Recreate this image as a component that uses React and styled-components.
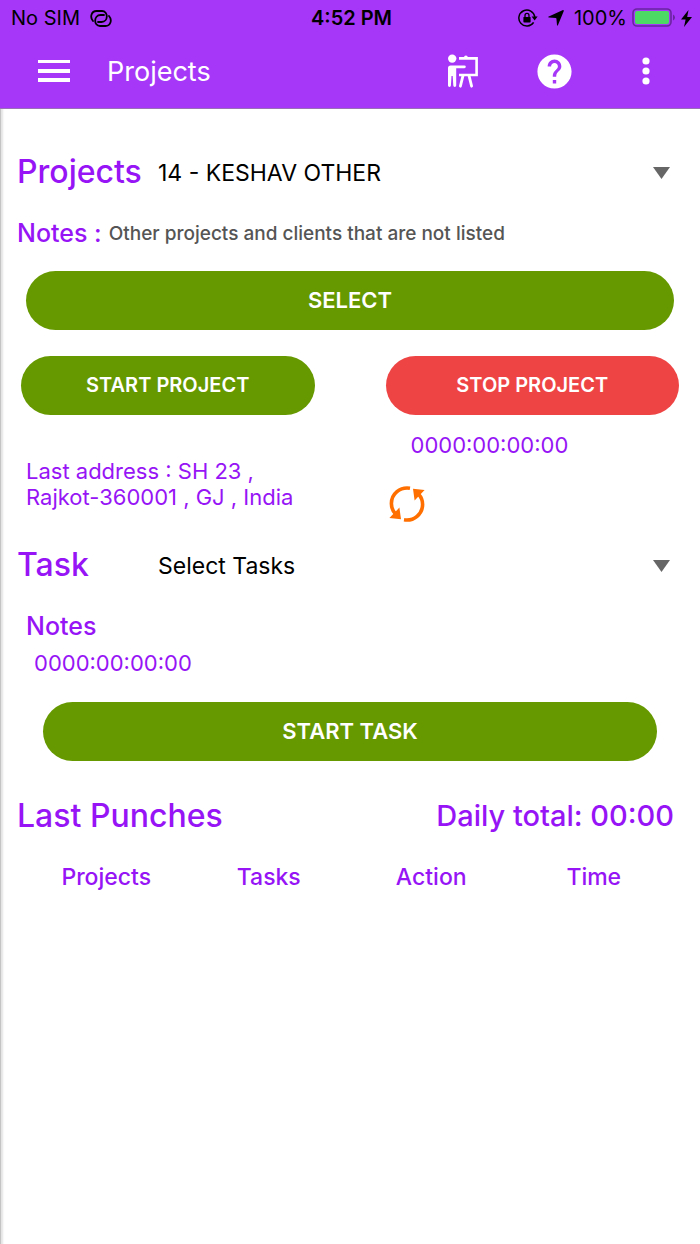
import React, { useState } from 'react';
import styled, { createGlobalStyle } from 'styled-components';
import { MdHelp } from 'react-icons/md';

const GlobalStyle = createGlobalStyle`
  * {
    box-sizing: border-box;
  }

  body {
    margin: 0;
    background: #fff;
    font-family: Inter, "Liberation Sans", sans-serif;
  }

  button, select {
    font-family: inherit;
  }
`

const PageSC = styled.div`
  min-height: 100vh;
  display: flex;
  flex-direction: column;
`

const HeaderSC = styled.header`
  background: #a637f8;
  border-bottom: 1px solid #9a70b8;
`

const StatusBarSC = styled.div`
  display: grid;
  grid-template-columns: 1fr auto 1fr;
  align-items: center;
  height: 36px;
  padding: 0 8px 0 11px;
  font-size: 20px;
  color: #000;
`

const StatusGroupSC = styled.div`
  display: flex;
  align-items: center;
  justify-content: ${props => props.$end ? "flex-end" : "flex-start"};
  gap: 10px;
`

const PowerSC = styled.div`
  display: flex;
  align-items: center;
  gap: 5px;
`

const ClockSC = styled.time`
  font-weight: 600;
`

const ToolbarSC = styled.div`
  display: flex;
  align-items: center;
  padding: 13px 28px 15px;
`

const TitleSC = styled.h1`
  flex: 1;
  margin: 0 0 0 27px;
  padding-top: 2px;
  font-size: 27px;
  font-weight: 400;
  line-height: 42px;
  color: #fff;
`

const IconButtonSC = styled.button`
  display: flex;
  align-items: center;
  justify-content: center;
  width: ${props => props.$small ? "42px" : "52px"};
  height: ${props => props.$small ? "36px" : "42px"};
  padding: 0;
  border: none;
  background: none;
  color: ${props => props.$small ? "#ff6f00" : "#fff"};
  cursor: pointer;
`

const ActionsSC = styled.div`
  display: flex;
  gap: 40px;
`

const MainSC = styled.main`
  flex: 1;
  padding: 37px 17px 0 16px;
  border-left: 1px solid #c4c4c4;
  box-shadow: inset 4px 0 2px -2px #e4e4e4;
`

const FieldRowSC = styled.div`
  display: flex;
  align-items: center;
`

const FieldLabelSC = styled.label`
  width: 141px;
  font-size: 32px;
  font-weight: 500;
  line-height: 52px;
  color: #9614f5;
`

const SelectWrapSC = styled.div`
  flex: 1;
  display: flex;
  align-items: center;
  padding: 2px 13px 0 0;
`

const SelectSC = styled.select`
  flex: 1;
  padding: 0;
  border: none;
  background: none;
  appearance: none;
  font-size: 23px;
  line-height: 36px;
  color: #000;
`

const NotesSC = styled.div`
  display: flex;
  align-items: center;
  gap: 7px;
  margin: 17px 0 20px;
  line-height: 36px;
`

const NotesLabelSC = styled.span`
  font-size: 25px;
  font-weight: 500;
  color: #9614f5;
`

const NotesTextSC = styled.span`
  padding-top: 2px;
  font-size: 19px;
  font-weight: 500;
  line-height: 34px;
  color: #555;
`

const TaskNotesSC = styled.p`
  margin: 17px 9px 6px;
  font-size: 25px;
  font-weight: 500;
  line-height: 36px;
  color: #9614f5;
`

const PillSC = styled.button`
  display: block;
  width: 100%;
  padding: 0;
  border: none;
  border-radius: 30px;
  background: ${props => props.$danger ? "#ef4444" : "#669900"};
  font-size: ${props => props.$compact ? "20px" : "22px"};
  font-weight: 600;
  line-height: 59px;
  color: #fff;
  cursor: pointer;
`

const InsetSC = styled.div`
  margin: 0 ${props => props.$wide ? "26px" : "9px"};
`

const SplitSC = styled.div`
  display: grid;
  grid-template-columns: 1fr 1fr;
  column-gap: 71px;
  margin: 26px 4px 17px;
`

const AddressSC = styled.address`
  margin: 43px 5px 0;
  font-size: 22px;
  font-style: normal;
  line-height: 26px;
  color: #9614f5;
`

const TimerSC = styled.div`
  margin: ${props => props.$task ? "0 17px 26px" : "17px 25px 28px"};
  font-size: 22px;
  line-height: 26px;
  color: #9614f5;
`

const SummarySC = styled.div`
  display: flex;
  justify-content: space-between;
  align-items: center;
  margin: 29px 9px 17px 0;
  line-height: 52px;
  color: #9614f5;
`

const SummaryTitleSC = styled.h2`
  margin: 0;
  font-size: 32px;
  font-weight: 500;
`

const SummaryTotalSC = styled.span`
  font-size: 29px;
  font-weight: 500;
`

const TableSC = styled.table`
  width: 100%;
  padding: 0 8px;
  table-layout: fixed;
  border-spacing: 0;
`

const HeadCellSC = styled.th`
  padding: 0;
  font-size: 23px;
  font-weight: 500;
  line-height: 36px;
  color: #9614f5;
`

const LinkIcon = () => (
  <svg width="22" height="17" viewBox="0 0 22 17" fill="none" stroke="#000" strokeWidth="1.8" strokeLinecap="round">
    <path d="M14 5h-3.500C3.500 5 3.500 16 10 16h5.500c5 0 7-6 3.500-10" />
    <path d="M14 5h-3.500C3.500 5 3.500 16 10 16h5.500c5 0 7-6 3.500-10" transform="rotate(180 11 8.500)" />
  </svg>
)

const RotationLockIcon = () => (
  <svg width="20" height="18" viewBox="0 0 20 18" fill="none" stroke="#000">
    <path d="M15.6 13.4A8 8 0 1 1 16.8 8" strokeWidth="1.5" />
    <path d="M13.6 7.6h6l-3 4z" fill="#000" stroke="none" />
    <rect x="5.4" y="8" width="7.2" height="5.4" rx="0.6" fill="#000" stroke="none" />
    <path d="M7 8.5V6.4a2 2 0 0 1 4 0v2.1" strokeWidth="1.3" />
  </svg>
)

const LocationIcon = () => (
  <svg width="16" height="16" viewBox="0 0 16 16">
    <path d="M15 0q1 0 .8 1L10 15q-.6 1.4-1 0L8.4 8.6Q8.4 8 7.600 8L1 7.400Q-.6 7 .8 6.400z" />
  </svg>
)

const BatteryIcon = () => (
  <svg width="44" height="20" viewBox="0 0 44 20">
    <rect x="1" y="1" width="38" height="17" rx="4" fill="none" stroke="#6a24a0" strokeWidth="1.6" />
    <rect x="3" y="3" width="34" height="13" rx="2" fill="#4cd964" />
    <path d="M41 6.6q2 1 2 2.9t-2 2.9z" fill="#6a24a0" />
  </svg>
)

const BoltIcon = () => (
  <svg width="11" height="17" viewBox="0 0 11 17">
    <path d="M7.5 0L0 9.6h4.6L3 17l8-10H6.2z" />
  </svg>
)

const MenuIcon = () => (
  <svg width="32" height="22" viewBox="0 0 32 22" fill="currentColor">
    <path d="M0 0h32v3H0zM0 9h32v4H0zM0 18h32v4H0z" />
  </svg>
)

const TrainingIcon = () => (
  <svg width="32" height="34" viewBox="-2 0 32 34" fill="currentColor">
    <circle cx="4.2" cy="4.6" r="4.2" />
    <path d="M0 14q0-2.600 2.600-2.600H16.400a1.400 1.400 0 0 1 0 2.800H8.200V31.600a1.400 1.400 0 0 1-2.900 0L4.700 22H3.500L2.900 31.600a1.400 1.400 0 0 1-2.900 0z" />
    <path d="M11 4.400h17.600v16.600H11" fill="none" stroke="currentColor" strokeWidth="2.600" />
    <path d="M16 3.400a1.900 1.900 0 0 1 3.800 0z" />
    <path d="M15 21.600l-2.600 10.600M21 21.600l2.600 10.600" fill="none" stroke="currentColor" strokeWidth="2.800" strokeLinecap="round" />
  </svg>
)

const DotsIcon = () => (
  <svg width="8" height="28" viewBox="0 0 8 28" fill="currentColor">
    <circle cx="4" cy="4" r="3.6" />
    <circle cx="4" cy="14" r="3.6" />
    <circle cx="4" cy="24" r="3.6" />
  </svg>
)

const SyncIcon = () => (
  <svg width="36" height="36" viewBox="0 0 36 36" fill="none" stroke="currentColor" strokeWidth="3.6">
    <path d="M21 2.2C11 .6 2.4 8 2.4 17.6c0 4.400 1.400 7.400 4 10.200" />
    <path d="M15 33.8C25 35.4 33.6 28 33.6 18.4c0-4.4-1.4-7.4-4-10.2" />
    <path d="M24 2.800l11.600 1.200L25.600 14.400zM12 33.200L.4 32 10.400 21.600z" fill="currentColor" stroke="none" />
  </svg>
)

const CaretIcon = () => (
  <svg width="17" height="12" viewBox="0 0 17 12" fill="#666">
    <path d="M0 0h17L8.5 12z" />
  </svg>
)

const columns = ["Projects", "Tasks", "Action", "Time"]

export default function App() {
  const [project, setProject] = useState("14")
  const [task, setTask] = useState("")

  return (
    <PageSC>
      <GlobalStyle />
      <HeaderSC>
        <StatusBarSC>
          <StatusGroupSC>No SIM <LinkIcon /></StatusGroupSC>
          <ClockSC>4:52 PM</ClockSC>
          <StatusGroupSC $end>
            <RotationLockIcon />
            <LocationIcon />
            <PowerSC>
              <span>100%</span>
              <BatteryIcon />
              <BoltIcon />
            </PowerSC>
          </StatusGroupSC>
        </StatusBarSC>
        <ToolbarSC>
          <IconButtonSC aria-label="Menu"><MenuIcon /></IconButtonSC>
          <TitleSC>Projects</TitleSC>
          <ActionsSC>
            <IconButtonSC aria-label="Training"><TrainingIcon /></IconButtonSC>
            <IconButtonSC aria-label="Help"><MdHelp size={41} /></IconButtonSC>
            <IconButtonSC aria-label="More"><DotsIcon /></IconButtonSC>
          </ActionsSC>
        </ToolbarSC>
      </HeaderSC>

      <MainSC>
        <FieldRowSC>
          <FieldLabelSC htmlFor="project">Projects</FieldLabelSC>
          <SelectWrapSC>
            <SelectSC id="project" value={project} onChange={ev => setProject(ev.target.value)}>
              <option value="14">14 - KESHAV OTHER</option>
            </SelectSC>
            <CaretIcon />
          </SelectWrapSC>
        </FieldRowSC>
        <NotesSC>
          <NotesLabelSC>Notes :</NotesLabelSC>
          <NotesTextSC>Other projects and clients that are not listed</NotesTextSC>
        </NotesSC>
        <InsetSC><PillSC>SELECT</PillSC></InsetSC>

        <SplitSC>
          <div>
            <PillSC $compact>START PROJECT</PillSC>
            <AddressSC>Last address : SH 23 ,<br />Rajkot-360001 , GJ , India</AddressSC>
          </div>
          <div>
            <PillSC $compact $danger>STOP PROJECT</PillSC>
            <TimerSC>0000:00:00:00</TimerSC>
            <IconButtonSC $small aria-label="Refresh address"><SyncIcon /></IconButtonSC>
          </div>
        </SplitSC>

        <FieldRowSC>
          <FieldLabelSC htmlFor="task">Task</FieldLabelSC>
          <SelectWrapSC>
            <SelectSC id="task" value={task} onChange={ev => setTask(ev.target.value)}>
              <option value="">Select Tasks</option>
            </SelectSC>
            <CaretIcon />
          </SelectWrapSC>
        </FieldRowSC>
        <TaskNotesSC>Notes</TaskNotesSC>
        <TimerSC $task>0000:00:00:00</TimerSC>
        <InsetSC $wide><PillSC>START TASK</PillSC></InsetSC>

        <SummarySC>
          <SummaryTitleSC>Last Punches</SummaryTitleSC>
          <SummaryTotalSC>Daily total: 00:00</SummaryTotalSC>
        </SummarySC>
        <TableSC>
          <thead>
            <tr>
              {columns.map(name => <HeadCellSC key={name} scope="col">{name}</HeadCellSC>)}
            </tr>
          </thead>
        </TableSC>
      </MainSC>
    </PageSC>
  )
}
